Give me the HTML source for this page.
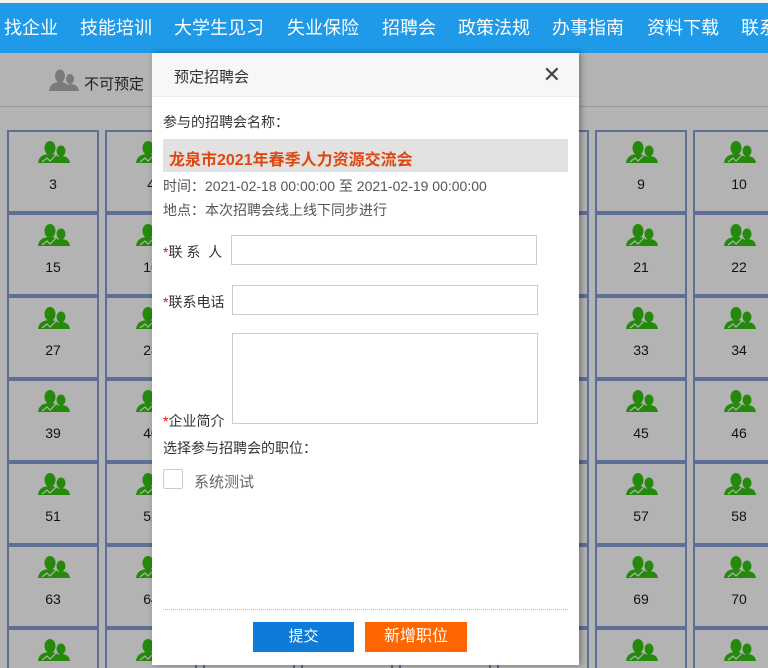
<!DOCTYPE html>
<html><head><meta charset="utf-8"><style>
*{margin:0;padding:0;box-sizing:border-box}
html{width:768px;height:668px;overflow:hidden}
body{width:768px;height:668px;overflow:hidden;background:#b3b3b3;font-family:"Liberation Sans","Noto Sans CJK SC",sans-serif;position:relative}
.nav{position:absolute;left:0;top:3px;width:768px;height:50px;background:#1e9ae9;}
.top{position:absolute;left:0;top:0;width:768px;height:3px;background:#f2f2f2}
.nav span{position:absolute;top:12px;color:#fff;font-size:18px;line-height:26px;white-space:nowrap}
.bar{position:absolute;left:0;top:106px;width:768px;height:1px;background:#999}
#g{position:absolute;left:0;top:0;width:768px;height:668px;overflow:hidden}
.cell{position:absolute;width:92px;height:83px;border:2px solid #5e6f96;background:#b3b3b3;text-align:center;font-size:14px;color:#111}
.cell svg{position:absolute;left:29px;top:9px}
.cell b{position:absolute;left:0;right:0;top:44px;font-weight:normal}
.modal{position:absolute;left:152px;top:53px;width:427px;height:612px;background:#fff;box-shadow:2px 0 6px rgba(0,0,0,.35)}
.hd{height:44px;background:#f7f7f7;border-bottom:1px solid #eee;font-size:15px;color:#333;padding:13px 0 0 22px;position:relative}
.x{position:absolute;right:18px;top:9px;font-size:22px;color:#444}
.t{position:absolute;font-size:14px;color:#333;white-space:nowrap}
.r{color:#f00}
.in{position:absolute;border:1px solid #ccc;background:#fff}
</style></head><body>
<div class="top"></div>
<div class="nav">
<span style="left:4px">找企业</span><span style="left:80px">技能培训</span><span style="left:174px">大学生见习</span><span style="left:287px">失业保险</span><span style="left:382px">招聘会</span><span style="left:458px">政策法规</span><span style="left:552px">办事指南</span><span style="left:647px">资料下载</span><span style="left:741px">联系</span>
</div>
<svg style="position:absolute;left:49px;top:69px" width="30" height="22" viewBox="0 0 30 22"><ellipse cx="11" cy="7" rx="5" ry="6.5" fill="#7a7a7a"/><ellipse cx="21" cy="10" rx="4" ry="5" fill="#7a7a7a"/><path d="M0 22 Q1 13 11 13 Q20 13 21 22Z M16 22 Q17 15 21 15 Q29 15 30 22Z" fill="#7a7a7a"/></svg>
<div class="t" style="left:84px;top:73px;color:#222;font-size:15px">不可预定</div>
<div class="bar"></div>
<div id="g"></div>
<div class="modal">
<div class="hd">预定招聘会<span class="x">✕</span></div>
<div class="t" style="left:11px;top:59px">参与的招聘会名称：</div>
<div style="position:absolute;left:11px;top:86px;width:405px;height:33px;background:#e2e2e2;color:#e0470e;font-weight:bold;font-size:16px;padding:7px 0 0 6px">龙泉市2021年春季人力资源交流会</div>
<div class="t" style="left:11px;top:123px;color:#555">时间：2021-02-18 00:00:00 至 2021-02-19 00:00:00</div>
<div class="t" style="left:11px;top:147px;color:#555">地点：本次招聘会线上线下同步进行</div>
<div class="t" style="left:11px;top:189px"><span class="r">*</span>联 系&nbsp; 人</div>
<div class="in" style="left:79px;top:182px;width:306px;height:30px"></div>
<div class="t" style="left:11px;top:239px"><span class="r">*</span>联系电话</div>
<div class="in" style="left:80px;top:232px;width:306px;height:30px"></div>
<div class="t" style="left:11px;top:358px"><span class="r">*</span>企业简介</div>
<div class="in" style="left:80px;top:280px;width:306px;height:91px"></div>
<div class="t" style="left:11px;top:385px">选择参与招聘会的职位：</div>
<div style="position:absolute;left:11px;top:416px;width:20px;height:20px;border:1px solid #ccc;border-radius:2px"></div>
<div class="t" style="left:42px;top:418px;color:#666;font-size:15px">系统测试</div>
<div style="position:absolute;left:11px;top:556px;width:405px;border-top:1px dotted #bbb"></div>
<div style="position:absolute;left:101px;top:569px;width:101px;height:30px;background:#0f7bd9;color:#fff;font-size:15px;text-align:center;line-height:30px">提交</div>
<div style="position:absolute;left:213px;top:569px;width:102px;height:30px;background:#ff6600;color:#fff;font-size:16px;text-align:center;line-height:30px">新增职位</div>
</div>
<script>
var h='',cols=[7,105,203,301,399,497,595,693],rows=[130,213,296,379,462,545,628];
var ic='<svg width="32" height="22" viewBox="0 0 32 22"><ellipse cx="12" cy="7" rx="5.5" ry="7" fill="#258a0b"/><ellipse cx="23" cy="10" rx="4.5" ry="5.5" fill="#258a0b"/><path d="M0 22 Q1 13 12 13 Q22 13 23 22Z M17 22 Q18 15 23 15 Q31 15 32 22Z" fill="#258a0b"/><path d="M4 21 L9 17 L12 20 L18 14" stroke="#b3b3b3" stroke-width="1.2" fill="none"/></svg>';
for(var r=0;r<7;r++)for(var c=0;c<8;c++){var n=r*12+c+3;var hh=r==6?'height:40px;border-bottom:0;':'';h+='<div class="cell" style="left:'+cols[c]+'px;top:'+rows[r]+'px;'+hh+'">'+ic+(r==6?'':'<b>'+n+'</b>')+'</div>';}
document.getElementById('g').innerHTML=h;
</script>
</body></html>
